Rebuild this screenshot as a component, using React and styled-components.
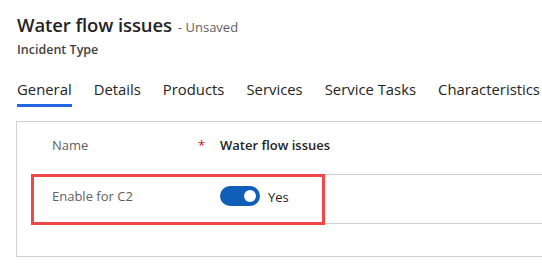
import React from "react";
import styled, { createGlobalStyle } from "styled-components";

const GlobalStyle = createGlobalStyle`
  html, body {
    margin: 0;
    padding: 0;
    background: #fff;
    overflow: hidden;
  }
  body {
    font-family: "Open Sans", "Noto Sans", sans-serif;
    color: #242424;
  }
`;

const tabs = ["General", "Details", "Products", "Services", "Service Tasks", "Characteristics"];

export default function App() {
  return (
    <Page>
      <GlobalStyle />
      <Header>
        <TitleLine>
          <Title>Water flow issues</Title>
          <Status>- Unsaved</Status>
        </TitleLine>
        <EntityName>Incident Type</EntityName>
      </Header>
      <TabBar>
        {tabs.map((t, i) => (
          <Tab key={t} active={i === 0}>{t}</Tab>
        ))}
      </TabBar>
      <Panel>
        <Row>
          <Label>Name</Label>
          <Required>*</Required>
          <Value>Water flow issues</Value>
        </Row>
        <Row>
          <Label>Enable for C2</Label>
          <Required />
          <ToggleWrap>
            <Toggle on>
              <Knob />
            </Toggle>
            <ToggleText>Yes</ToggleText>
          </ToggleWrap>
          <Highlight />
        </Row>
      </Panel>
    </Page>
  );
}

const Page = styled.div`
  width: 542px;
  height: 266px;
  overflow: hidden;
`;

const Header = styled.div`
  padding: 11px 0 0 17px;
`;

const TitleLine = styled.div`
  display: flex;
  align-items: baseline;
  gap: 6px;
`;

const Title = styled.h1`
  margin: 0;
  font-size: 18.5px;
  font-weight: 600;
  line-height: 28px;
  color: #242424;
  letter-spacing: -0.1px;
`;

const Status = styled.span`
  font-size: 13px;
  color: #616161;
`;

const EntityName = styled.div`
  margin-top: 2px;
  font-size: 12.5px;
  font-weight: 600;
  color: #424242;
  line-height: 18px;
`;

const TabBar = styled.div`
  display: flex;
  gap: 22px;
  padding: 20px 0 0 17px;
  white-space: nowrap;
`;

const Tab = styled.div`
  font-size: 14.85px;
  line-height: 20px;
  padding-bottom: 5px;
  color: #242424;
  border-bottom: 3px solid ${p => (p.active ? "#2266e3" : "transparent")};
`;

const Panel = styled.div`
  margin: 14px 0 0 16px;
  width: 580px;
  height: 136px;
  border: 1px solid #d1d1d1;
  padding: 0 0 0 15px;
  box-sizing: border-box;
`;

const Row = styled.div`
  position: relative;
  display: flex;
  align-items: center;
  height: 49px;
  padding: 0 0 6px 20px;
  box-sizing: border-box;
  border-bottom: 1px solid #d1d1d1;
  &:first-child {
    height: 53px;
  }
`;

const Label = styled.div`
  width: 146px;
  font-size: 13px;
  color: #616161;
`;

const Required = styled.div`
  width: 22px;
  color: #c50f1f;
  font-size: 13px;
  align-self: flex-start;
  padding-top: 14px;
`;

const Value = styled.div`
  font-size: 13px;
  font-weight: 600;
  color: #242424;
`;

const ToggleWrap = styled.div`
  display: flex;
  align-items: center;
  gap: 8px;
`;

const Toggle = styled.div`
  width: 40px;
  height: 20px;
  border-radius: 10px;
  background: ${p => (p.on ? "#0f5fb8" : "#fff")};
  display: flex;
  align-items: center;
  justify-content: ${p => (p.on ? "flex-end" : "flex-start")};
  padding: 0 4px;
  box-sizing: border-box;
`;

const Knob = styled.div`
  width: 12px;
  height: 12px;
  border-radius: 50%;
  background: #fff;
`;

const ToggleText = styled.span`
  font-size: 13px;
  color: #242424;
  margin-top: 2px;
`;

const Highlight = styled.div`
  position: absolute;
  left: -1px;
  top: -1px;
  width: 294px;
  height: 51px;
  border: 3px solid #f04848;
  box-sizing: border-box;
  pointer-events: none;
`;
